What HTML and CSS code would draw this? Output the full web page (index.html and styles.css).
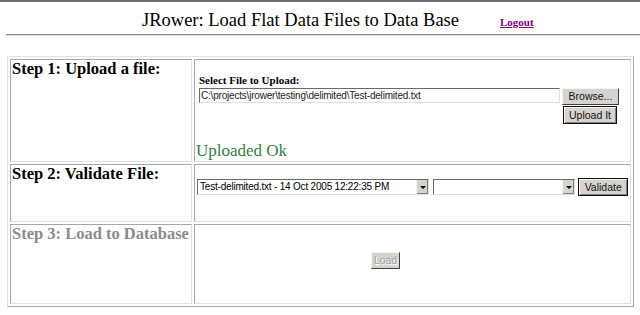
FILE: index.html
```html
<!DOCTYPE html>
<html>
<head>
	<link rel="stylesheet" href="styles.css">
</head>
<body>

	<div class="header">
		<h1 class="title">JRower: Load Flat Data Files to Data Base</h1>
		<a class="logout" href="#">Logout</a>
	</div>
	<hr class="rule">

	<table class="steps">
		<!-- step 1 -->
		<tr class="row1">
			<td class="label"><h2>Step 1: Upload a file:</h2></td>
			<td class="body">
				<div class="upload">
					<div class="caption">Select File to Upload:</div>
					<div class="filerow">
						<input class="filepath" type="text" value="C:\projects\jrower\testing\delimited\Test-delimited.txt">
						<button class="btn">Browse...</button>
					</div>
					<div class="uploadrow">
						<button class="btn strong">Upload It</button>
					</div>
				</div>
				<div class="ok">Uploaded Ok</div>
			</td>
		</tr>
		<!-- step 2 -->
		<tr class="row2">
			<td class="label"><h2>Step 2: Validate File:</h2></td>
			<td class="body">
				<div class="validate">
					<div class="sel wide"><span>Test-delimited.txt - 14 Oct 2005 12:22:35 PM</span><i class="arrow"></i></div>
					<div class="sel narrow"><span></span><i class="arrow"></i></div>
					<button class="btn strong">Validate</button>
				</div>
			</td>
		</tr>
		<!-- step 3 -->
		<tr class="row3">
			<td class="label"><h2 class="off">Step 3: Load to Database</h2></td>
			<td class="body">
				<button class="btn load" disabled>Load</button>
			</td>
		</tr>
	</table>

</body>
</html>
```

FILE: styles.css
```css
*, html, body{
	margin: 0;
	padding: 0;
}
body{
	background: #fff;
	border-top: 2px solid #6f6f6f;
	font-family: "Liberation Serif", "Times New Roman", serif;
	color: #000;
}
.header{
	display: flex;
	align-items: flex-end;
	height: 31px;
	padding-left: 142px;
}
.title{
	font-weight: normal;
	font-size: 18.5px;
	line-height: 20px;
	padding-bottom: 3px;
}
.logout{
	margin-left: 41px;
	font-size: 11px;
	font-weight: bold;
	color: #800080;
	padding-bottom: 5px;
}
.rule{
	border: 0;
	border-top: 1px solid #8a8a8a;
	border-bottom: 1px solid #e4e4e4;
	margin: 1px 0 0 6px;
}
.steps{
	margin: 20px 0 0 7px;
	width: 627px;
	table-layout: fixed;
	border-collapse: separate;
	border-spacing: 2px;
	border: 1px solid;
	border-color: #e2e2e2 #a8a8a8 #a8a8a8 #e2e2e2;
}
.steps td{
	vertical-align: top;
	border: 1px solid;
	border-color: #a8a8a8 #e2e2e2 #e2e2e2 #a8a8a8;
}
.label{
	width: 178px;
	padding: 0 1px;
}
.label h2{
	font-size: 16.5px;
	line-height: 17px;
	white-space: nowrap;
}
.label h2.off{
	color: #8c8c8c;
}
.row1 td{ height: 101px; }
.row2 td{ height: 56px; }
.row3 td{ height: 78px; }
.body{
	padding: 0 2px 0 1px;
}
.upload{
	padding: 14px 0 0 3px;
}
.caption{
	font-size: 11px;
	font-weight: bold;
	line-height: 13px;
}
.filerow{
	display: flex;
	align-items: flex-start;
	margin-top: 1px;
}
.filepath{
	width: 361px;
	height: 15px;
	box-sizing: border-box;
	font-family: "Liberation Sans", Arial, sans-serif;
	font-size: 10px;
	letter-spacing: -0.2px;
	padding: 0 1px;
	border: 1px solid;
	border-color: #6a6a6a #e0e0e0 #e0e0e0 #6a6a6a;
	color: #222;
	outline: none;
}
.btn{
	font-family: "Liberation Sans", Arial, sans-serif;
	font-size: 10.5px;
	background: #d6d3ce;
	color: #111;
	border: 1px solid;
	border-color: #f4f4f4 #404040 #404040 #f4f4f4;
	padding: 0;
	height: 17px;
	line-height: 13px;
}
.filerow .btn{
	margin-left: 2px;
	width: 57px;
}
.btn.strong{
	border: 1px solid #111;
	box-shadow: inset 1px 1px 0 #f4f4f4, inset -1px -1px 0 #808080;
	height: 18px;
}
.uploadrow{
	display: flex;
	justify-content: flex-end;
	padding-right: 11px;
	margin-top: 1px;
}
.uploadrow .btn{
	width: 54px;
}
.ok{
	color: #357f45;
	font-size: 17px;
	line-height: 20px;
	margin-top: 17px;
}
.validate{
	display: flex;
	align-items: flex-start;
	padding: 14px 0 0 1px;
}
.sel{
	display: flex;
	height: 16px;
	box-sizing: border-box;
	border: 1px solid;
	border-color: #6a6a6a #e0e0e0 #e0e0e0 #6a6a6a;
	font-family: "Liberation Sans", Arial, sans-serif;
	font-size: 10px;
	letter-spacing: -0.2px;
	line-height: 14px;
}
.sel span{
	flex: 1;
	padding-left: 2px;
	white-space: nowrap;
	overflow: hidden;
}
.sel.wide{ width: 234px; }
.sel.narrow{ width: 144px; margin-left: 4px; }
.arrow{
	width: 11px;
	height: 14px;
	background: #d6d3ce;
	border-left: 1px solid #f4f4f4;
	box-shadow: inset -1px -1px 0 #808080;
	position: relative;
}
.arrow::after{
	content: "";
	position: absolute;
	left: 3px;
	top: 6px;
	border-left: 3px solid transparent;
	border-right: 3px solid transparent;
	border-top: 3px solid #000;
}
.validate .btn{
	margin-left: 3px;
	margin-top: -1px;
	width: 50px;
}
.btn.load{
	margin: 27px 0 0 175px;
	width: 29px;
	color: #a0a0a0;
	text-shadow: 1px 1px 0 #fff;
}
```
